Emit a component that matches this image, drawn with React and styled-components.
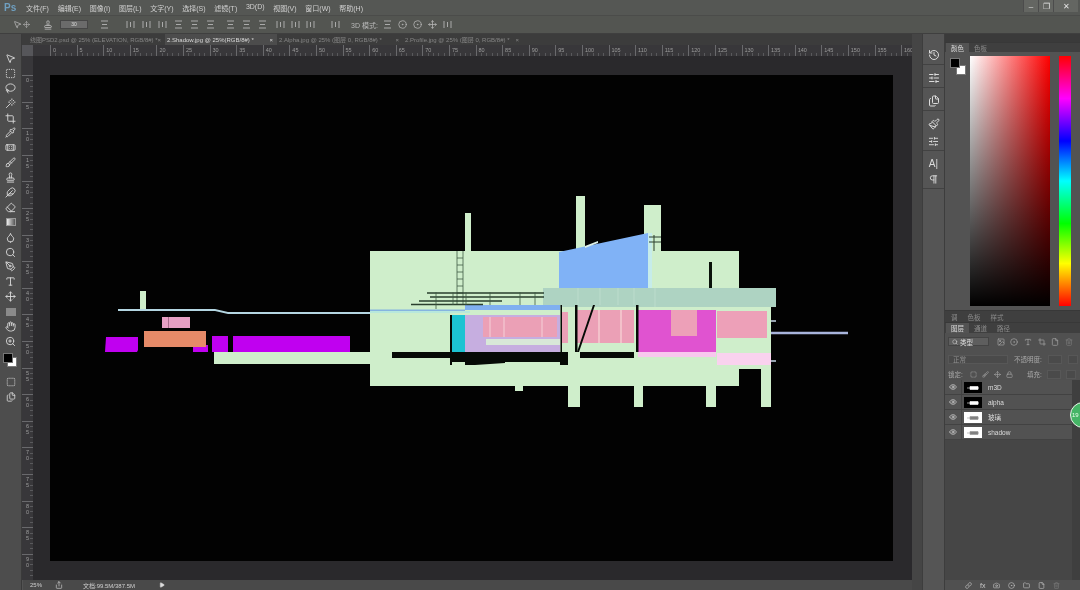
import React from "react";
import styled, { createGlobalStyle } from "styled-components";
import {
  MousePointer2, SquareDashed, Lasso, Wand, Crop, Pipette, Bandage, Brush, Stamp, Feather,
  Eraser, Droplet, Search, PenTool, Type, Hand, ZoomIn, Eye, Image, CircleDot, File, Lock, Move,
  Link, Camera, Folder, Trash2, Pilcrow, History, SlidersHorizontal, Files, Paintbrush, Play, Share,
} from "lucide-react";

const menus = ["文件(F)", "编辑(E)", "图像(I)", "图层(L)", "文字(Y)", "选择(S)", "滤镜(T)", "3D(D)", "视图(V)", "窗口(W)", "帮助(H)"];

const tabs = [
  { label: "线图PSD2.psd @ 25% (ELEVATION, RGB/8#) *", width: 137 },
  { label: "2.Shadow.jpg @ 25%(RGB/8#) *", width: 112, active: true },
  { label: "2.Alpha.jpg @ 25% (图层 0, RGB/8#) *", width: 126 },
  { label: "2.Profile.jpg @ 25% (图层 0, RGB/8#) *", width: 120 },
];

const tools = [MousePointer2, SquareDashed, Lasso, Wand, Crop, Pipette, Bandage, Brush, Stamp, Feather, Eraser, null, Droplet, Search, PenTool, Type, Move, null, Hand, ZoomIn];

const rulerMarks = Array.from({ length: 33 }, (_, i) => i * 5);
const sideMarks = Array.from({ length: 19 }, (_, i) => i * 5);

const layers = [
  { name: "m3D", dark: true },
  { name: "alpha", dark: true },
  { name: "玻璃", dark: false },
  { name: "shadow", dark: false },
];

const GlobalStyle = createGlobalStyle`
  html, body {
    margin: 0;
    padding: 0;
    background: #4f4f4f;
  }
  * {
    box-sizing: border-box;
  }
`;

const Window = styled.div`
  position: relative;
  width: 1080px;
  height: 590px;
  overflow: hidden;
  display: flex;
  flex-direction: column;
  background: #535353;
  color: #c4c4c4;
  font-family: "Liberation Sans", "Noto Sans CJK SC", sans-serif;
  font-size: 7px;
  filter: blur(0.35px);
`;

const MenuBar = styled.div`
  height: 15px;
  display: flex;
  align-items: center;
  background: #555754;
  padding-right: 2px;
`;

const Logo = styled.span`
  width: 26px;
  padding-left: 4px;
  color: #6f9fc0;
  font-size: 10px;
  font-weight: 700;
`;

const MenuItems = styled.div`
  display: flex;
  gap: 8.7px;
  font-size: 7px;
  color: #d0d0d0;
`;

const WindowButtons = styled.div`
  margin-left: auto;
  display: flex;
  height: 12px;
  margin-top: -3px;
  background: #646662;
  color: #e4e4e4;
`;

const WindowButton = styled.span`
  width: ${(p) => p.$w}px;
  display: flex;
  align-items: center;
  justify-content: center;
  font-size: 8px;
  border-left: 1px solid #4c4c4c;
`;

const OptionsBar = styled.div`
  height: 19px;
  display: flex;
  align-items: center;
  padding-left: 13px;
  background: #535551;
  border-top: 1px solid #4b4c4a;
  border-bottom: 1px solid #3f3f3f;
  color: #b9b9b9;
`;

const OptionGroup = styled.div`
  display: flex;
  align-items: center;
  gap: ${(p) => p.$gap || 5}px;
  width: ${(p) => p.$w}px;
`;

const SizeBox = styled.div`
  width: 28px;
  height: 9px;
  background: #6b6b6b;
  border: 1px solid #464646;
  font-size: 5px;
  line-height: 7px;
  text-align: center;
  color: #ddd;
`;

const AlignMark = styled.svg`
  width: 9px;
  height: 9px;
  flex: none;
`;

const Workspace = styled.div`
  flex: 1;
  min-height: 0;
  display: flex;
`;

const ToolPanel = styled.div`
  width: 22px;
  padding-top: 17px;
  background: #4d4d4d;
  border-right: 1px solid #3a3a3a;
  display: flex;
  flex-direction: column;
  color: #d8d8d8;
`;

const ToolButton = styled.div`
  height: 14.9px;
  flex: none;
  display: flex;
  align-items: center;
  justify-content: center;
`;

const GradientTool = styled.span`
  width: 10px;
  height: 8px;
  background: linear-gradient(90deg, #eee, #555);
  border: 1px solid #999;
`;

const ShapeTool = styled.span`
  width: 10px;
  height: 8px;
  background: #8a8a8a;
`;

const ToolSwatches = styled.div`
  position: relative;
  height: 24px;
  margin-top: 2px;
`;

const SwatchBox = styled.span`
  position: absolute;
  left: ${(p) => p.$x}px;
  top: ${(p) => p.$y}px;
  width: ${(p) => p.$s}px;
  height: ${(p) => p.$s}px;
  background: ${(p) => p.$c};
  border: 1px solid #777;
`;

const DocColumn = styled.div`
  width: 890px;
  display: flex;
  flex-direction: column;
`;

const TabRow = styled.div`
  height: 11px;
  display: flex;
  padding-left: 6px;
  background: #3c3c3c;
`;

const Tab = styled.div`
  width: ${(p) => p.$w}px;
  padding-left: 2px;
  display: flex;
  align-items: center;
  justify-content: space-between;
  padding-right: 4px;
  font-size: 6px;
  white-space: nowrap;
  overflow: hidden;
  color: ${(p) => (p.$active ? "#d8d8d8" : "#858585")};
  background: ${(p) => (p.$active ? "#4c4c4c" : "#3c3c3c")};
`;

const RulerRow = styled.div`
  height: 11px;
  display: flex;
`;

const RulerCorner = styled.div`
  width: 11px;
  background: #56565a;
`;

const HRuler = styled.div`
  flex: 1;
  display: flex;
  padding-left: 17px;
  overflow: hidden;
  color: #9c9c9c;
  background-color: #38373a;
  background-image:
    repeating-linear-gradient(90deg, #69696c 0 1px, transparent 1px 26.6px),
    repeating-linear-gradient(90deg, #59595c 0 1px, transparent 1px 5.32px);
  background-position: 17px 0, 17px 100%;
  background-size: 100% 100%, 100% 3px;
  background-repeat: no-repeat;
  font-size: 5.5px;
  line-height: 10px;
`;

const RulerMark = styled.span`
  width: 26.6px;
  flex: none;
  padding-left: 3px;
`;

const DocBody = styled.div`
  flex: 1;
  min-height: 0;
  display: flex;
`;

const VRuler = styled.div`
  width: 11px;
  padding-top: 19px;
  overflow: hidden;
  color: #9c9c9c;
  background-color: #38373a;
  background-image:
    repeating-linear-gradient(180deg, #69696c 0 1px, transparent 1px 26.6px),
    repeating-linear-gradient(180deg, #59595c 0 1px, transparent 1px 5.32px);
  background-position: 0 19px, 100% 19px;
  background-size: 100% 100%, 3px 100%;
  background-repeat: no-repeat;
  font-size: 5.5px;
  line-height: 6px;
`;

const SideMark = styled.div`
  height: 26.6px;
  padding: 2px 0 0 4px;
  width: 8px;
  word-break: break-all;
`;

const Pasteboard = styled.div`
  flex: 1;
  padding: 19px 0 0 17px;
  background: #2a292c;
`;

const Canvas = styled.svg`
  display: block;
  width: 843px;
  height: 486px;
  background: #020202;
`;

const StatusBar = styled.div`
  height: 10px;
  margin-left: 1px;
  display: flex;
  align-items: center;
  background: #494949;
  font-size: 6px;
  color: #cfcfcf;
`;

const StatusZoom = styled.span`
  width: 32px;
  padding-left: 7px;
`;

const StatusDoc = styled.span`
  width: 76px;
  margin-left: 20px;
`;

const ScrollGutter = styled.div`
  width: 10px;
  background: #454545;
`;

const DockStrip = styled.div`
  width: 23px;
  padding-top: 8px;
  background: #555;
  border-left: 1px solid #3d3d3d;
  border-right: 1px solid #3d3d3d;
  color: #dcdcdc;
`;

const DockGroup = styled.div`
  padding: 7px 0 3px;
  display: flex;
  flex-direction: column;
  align-items: center;
  gap: ${(p) => p.$gap || 0}px;
  border-bottom: 1px solid #424242;
  font-size: 10px;
`;

const Panels = styled.div`
  flex: 1;
  display: flex;
  flex-direction: column;
  background: #464646;
`;

const PanelHeader = styled.div`
  height: 8px;
  background: #3a3a3a;
`;

const PanelTabs = styled.div`
  height: ${(p) => p.$h}px;
  display: flex;
  align-items: stretch;
  padding-left: 1px;
  background: #3f3f3f;
  font-size: 6.5px;
  color: #8c8c8c;
  border-top: 1px solid #383838;
`;

const PanelTab = styled.span`
  padding: 0 5px;
  display: flex;
  align-items: center;
  color: ${(p) => (p.$active ? "#dcdcdc" : "#8c8c8c")};
  background: ${(p) => (p.$active ? "#535353" : "transparent")};
`;

const ColorBody = styled.div`
  height: 258px;
  padding: 4px 9px 0 5px;
  display: flex;
  background: #535353;
`;

const SwatchPair = styled.div`
  position: relative;
  width: 20px;
  height: 18px;
  margin-top: 2px;
`;

const ColorField = styled.div`
  width: 80px;
  height: 250px;
  background:
    linear-gradient(180deg, transparent, #000),
    linear-gradient(90deg, #fff, #ff0000);
`;

const HueBar = styled.div`
  width: 12px;
  height: 250px;
  margin-left: 9px;
  background: linear-gradient(
    180deg,
    #ff0000 0%,
    #ff00ff 17%,
    #0000ff 34%,
    #00ffff 50%,
    #00ff00 67%,
    #ffff00 83%,
    #ff0000 100%
  );
`;

const ControlRow = styled.div`
  height: ${(p) => p.$h}px;
  display: flex;
  align-items: center;
  gap: ${(p) => p.$gap || 6}px;
  padding-left: 3px;
  background: #505050;
  color: #a8a8a8;
  font-size: 6.5px;
`;

const FilterBox = styled.div`
  width: 41px;
  height: 9px;
  margin-right: 2px;
  padding-left: 3px;
  display: flex;
  align-items: center;
  gap: 2px;
  color: #ddd;
  background: #5e5e5e;
  border: 1px solid #444;
`;

const FieldBox = styled.div`
  width: ${(p) => p.$w}px;
  height: 9px;
  margin-left: ${(p) => p.$ml || 0}px;
  padding-left: 4px;
  line-height: 7px;
  color: #8f8f8f;
  background: #4a4a4a;
  border: 1px solid #575757;
`;

const LockLabel = styled.span`
  width: 17px;
`;

const FillLabel = styled.span`
  margin-left: 9px;
`;

const LayerArea = styled.div`
  flex: 1;
  display: flex;
  background: #464646;
`;

const LayerList = styled.div`
  width: 127px;
`;

const LayerRow = styled.div`
  height: 15px;
  display: flex;
  align-items: center;
  background: #525252;
  border-bottom: 1px solid #424242;
  color: #dcdcdc;
  font-size: 6.5px;
`;

const EyeCell = styled.div`
  width: 17px;
  height: 100%;
  display: flex;
  align-items: center;
  justify-content: center;
  border-right: 1px solid #444;
`;

const Thumb = styled.svg`
  width: 18px;
  height: 11px;
  margin: 0 6px 0 2px;
`;

const LayerScroll = styled.div`
  flex: 1;
  background: #3f3f3f;
`;

const LayerFooter = styled.div`
  height: 10px;
  display: flex;
  align-items: center;
  gap: 8px;
  padding-left: 20px;
  background: #505050;
  color: #c8c8c8;
`;

const DimTrash = styled(Trash2)`
  color: #7c7c7c;
`;

const Badge = styled.div`
  position: absolute;
  left: 1070px;
  top: 402px;
  width: 26px;
  height: 26px;
  padding-left: 1px;
  border-radius: 50%;
  border: 1px solid #e8f5e8;
  background: #45b566;
  color: #e8ffe8;
  font-size: 6px;
  line-height: 24px;
`;

const Rule = ({ v }) => <AlignMark viewBox="0 0 9 9"><path d={v ? "M1 1v7M4.5 2v5M8 1v7" : "M1 1h7M2 4.5h5M1 8h7"} stroke="#aaa" strokeWidth="1" fill="none" /></AlignMark>;

const Building = () => (
  <Canvas viewBox="50 75 843 486">
    {/* elevation colour map */}
    <g fill="#cfeecb">
      <rect x="370" y="251" width="369" height="135" />
      <rect x="465" y="213" width="6" height="38" />
      <rect x="576" y="196" width="9" height="56" />
      <rect x="644" y="205" width="17" height="46" />
      <rect x="738" y="305" width="33" height="64" />
      <rect x="761" y="369" width="10" height="38" />
      <rect x="568" y="386" width="12" height="21" />
      <rect x="634" y="386" width="9" height="21" />
      <rect x="706" y="386" width="10" height="21" />
      <rect x="214" y="352" width="156" height="12" />
      <rect x="140" y="291" width="6" height="19" />
      <rect x="515" y="386" width="8" height="5" />
    </g>
    <path d="M559 252 L648 233 L650 288 L559 288Z" fill="#80b2f6" />
    <path d="M585 246 L598 241 L598 243 L585 248Z" fill="#dcf0ea" />
    <rect x="648" y="233" width="4" height="55" fill="#c6ecea" />
    <path d="M543 288H776V307H543Z" fill="#aed3c2" />
    <path d="M600 288v17M578 288v17M618 288v17M634 288v17M655 288v19" stroke="#bcdccc" strokeWidth="1" />
    <path d="M118 309H215L228 312H370V314H228L215 311H118Z" fill="#b4d6e2" />
    <path d="M370 309.5H465V311H370Z" fill="#86b4e0" />
    <path d="M465 305H560V310H465Z" fill="#80b0f0" />
    <path d="M370 311H470V313H370Z" fill="#b8e8dc" />

    <rect x="162" y="317" width="28" height="11" fill="#e79fc4" />
    <rect x="168" y="317" width="1" height="11" fill="#a86a8a" />
    <g fill="#c000f0">
      <path d="M106 337H138V350L137 352H105Z" />
      <rect x="193" y="345" width="15" height="7" />
      <rect x="212" y="336" width="16" height="16" />
      <rect x="233" y="336" width="117" height="16" />
    </g>
    <rect x="144" y="331" width="62" height="16" fill="#e58a68" />

    {/* ladder and railings */}
    <g stroke="#3f5a45" fill="none">
      <path d="M457 251V305M463 251V305M457 258h6M457 265h6M457 272h6M457 279h6M457 286h6M457 293h6" strokeWidth="0.8" />
      <path d="M427 293H544M430 297H544M419 301H502M411 304.5H483" strokeWidth="1.3" stroke="#2a3f2e" />
      <path d="M436 292V309M453 292V305M466 292V305M490 292V305M520 292V305M535 292V305" strokeWidth="0.8" />
      <path d="M649 237H661M649 242H661M654 235V251" strokeWidth="1" stroke="#2a3f2e" />
    </g>
    <rect x="709" y="262" width="3" height="26" fill="#0a120a" />

    {/* glazing */}
    <rect x="452" y="315" width="13" height="37" fill="#1cc3d2" />
    <rect x="465" y="315" width="95" height="37" fill="#c6aee0" />
    <rect x="483" y="317" width="74" height="20" fill="#eba0b6" />
    <path d="M490 317v20M504 317v20M542 317v20" stroke="#f5d0d8" strokeWidth="1" />
    <rect x="486" y="339" width="75" height="6" fill="#d8e8d8" />
    <rect x="562" y="312" width="6" height="31" fill="#eba0b6" />
    <rect x="577" y="310" width="57" height="33" fill="#eba0b6" />
    <path d="M599 310v33M621 310v33" stroke="#f8d8d8" strokeWidth="1.2" />
    <rect x="638" y="310" width="78" height="42" fill="#e053d0" />
    <rect x="671" y="310" width="26" height="26" fill="#eda0b8" />
    <rect x="717" y="311" width="50" height="27" fill="#eda0b8" />
    <rect x="638" y="352" width="78" height="5" fill="#f8c8ee" />
    <rect x="717" y="353" width="54" height="12" fill="#f9d2ee" />

    {/* black structure */}
    <g fill="#060a06">
      <rect x="392" y="352" width="176" height="6" />
      <rect x="451" y="352" width="117" height="10" />
      <rect x="560" y="352" width="8" height="13" />
      <rect x="450" y="315" width="2" height="50" />
      <rect x="560.5" y="305" width="1.5" height="47" />
      <rect x="575" y="305" width="2.5" height="47" />
      <rect x="580" y="352" width="54" height="6" />
      <rect x="636" y="305" width="2.5" height="47" />
      <path d="M465 362H505V363L475 365H465Z" />
      <path d="M593 305H595L579 352H577Z" />
    </g>
    <path d="M771 333H848" stroke="#a8b4dc" strokeWidth="2.5" />
    <path d="M771 321h5M771 361h5" stroke="#c8d8e8" strokeWidth="1.5" />
  </Canvas>
);

const App = () => {
  return (
    <Window>
      <GlobalStyle />
      <MenuBar>
        <Logo>Ps</Logo>
        <MenuItems>
          {menus.map((m) => (
            <span key={m}>{m}</span>
          ))}
        </MenuItems>
        <WindowButtons>
          <WindowButton $w={15}>–</WindowButton>
          <WindowButton $w={15}>❐</WindowButton>
          <WindowButton $w={25}>✕</WindowButton>
        </WindowButtons>
      </MenuBar>

      <OptionsBar>
        <OptionGroup $w={30} $gap={1}>
          <MousePointer2 size={9} />
          <Move size={7} />
        </OptionGroup>
        <OptionGroup $w={17}>
          <Stamp size={10} />
        </OptionGroup>
        <OptionGroup $w={40}>
          <SizeBox>30</SizeBox>
        </OptionGroup>
        <OptionGroup $w={26}>
          <Rule />
        </OptionGroup>
        <OptionGroup $w={100} $gap={7}>
          <Rule v /><Rule v /><Rule v /><Rule /><Rule /><Rule />
        </OptionGroup>
        <OptionGroup $w={50} $gap={7}>
          <Rule /><Rule /><Rule />
        </OptionGroup>
        <OptionGroup $w={55} $gap={6}>
          <Rule v /><Rule v /><Rule v />
        </OptionGroup>
        <OptionGroup $w={20}>
          <Rule v />
        </OptionGroup>
        <OptionGroup $w={32}>
          <span>3D 模式:</span>
        </OptionGroup>
        <OptionGroup $gap={6}>
          <Rule /><CircleDot size={9} /><CircleDot size={9} /><Move size={9} /><Rule v />
        </OptionGroup>
      </OptionsBar>

      <Workspace>
        <ToolPanel>
          {tools.map((Icon, i) => (
            <ToolButton key={i}>
              {Icon ? <Icon size={11} /> : i === 11 ? <GradientTool /> : <ShapeTool />}
            </ToolButton>
          ))}
          <ToolSwatches>
            <SwatchBox $x={7} $y={6} $s={10} $c="#fff" />
            <SwatchBox $x={3} $y={2} $s={10} $c="#000" />
          </ToolSwatches>
          <ToolButton><SquareDashed size={10} /></ToolButton>
          <ToolButton><Files size={10} /></ToolButton>
        </ToolPanel>

        <DocColumn>
          <TabRow>
            {tabs.map((t) => (
              <Tab key={t.label} $w={t.width} $active={t.active}>
                <span>{t.label}</span>
                <span>×</span>
              </Tab>
            ))}
          </TabRow>
          <RulerRow>
            <RulerCorner />
            <HRuler>
              {rulerMarks.map((m) => (
                <RulerMark key={m}>{m}</RulerMark>
              ))}
            </HRuler>
          </RulerRow>
          <DocBody>
            <VRuler>
              {sideMarks.map((m) => (
                <SideMark key={m}>{m}</SideMark>
              ))}
            </VRuler>
            <Pasteboard>
              <Building />
            </Pasteboard>
          </DocBody>
          <StatusBar>
            <StatusZoom>25%</StatusZoom>
            <Share size={8} />
            <StatusDoc>文档:99.5M/387.5M</StatusDoc>
            <Play size={6} fill="#ddd" />
          </StatusBar>
        </DocColumn>

        <ScrollGutter />

        <DockStrip>
          <DockGroup><History size={12} /></DockGroup>
          <DockGroup><SlidersHorizontal size={12} /></DockGroup>
          <DockGroup><Files size={12} /></DockGroup>
          <DockGroup $gap={6}><Paintbrush size={12} /><SlidersHorizontal size={11} /></DockGroup>
          <DockGroup $gap={5}><span>A|</span><Pilcrow size={11} /></DockGroup>
        </DockStrip>

        <Panels>
          <PanelHeader />
          <PanelTabs $h={10}>
            <PanelTab $active>颜色</PanelTab>
            <PanelTab>色板</PanelTab>
          </PanelTabs>
          <ColorBody>
            <SwatchPair>
              <SwatchBox $x={6} $y={7} $s={10} $c="#fff" />
              <SwatchBox $x={0} $y={0} $s={10} $c="#000" />
            </SwatchPair>
            <ColorField />
            <HueBar />
          </ColorBody>
          <PanelTabs $h={12}>
            <PanelTab>调</PanelTab>
            <PanelTab>色板</PanelTab>
            <PanelTab>样式</PanelTab>
          </PanelTabs>
          <PanelTabs $h={11}>
            <PanelTab $active>图层</PanelTab>
            <PanelTab>通道</PanelTab>
            <PanelTab>路径</PanelTab>
          </PanelTabs>
          <ControlRow $h={17} $gap={5.7}>
            <FilterBox><Search size={6} />类型</FilterBox>
            <Image size={8} />
            <CircleDot size={8} />
            <Type size={8} />
            <Crop size={8} />
            <File size={8} />
            <DimTrash size={8} />
          </ControlRow>
          <ControlRow $h={18}>
            <FieldBox $w={60}>正常</FieldBox>
            <span>不透明度:</span>
            <FieldBox $w={14} />
            <FieldBox $w={10} />
          </ControlRow>
          <ControlRow $h={12} $gap={5}>
            <LockLabel>锁定:</LockLabel>
            <SquareDashed size={7} />
            <Brush size={7} />
            <Move size={7} />
            <Lock size={7} />
            <FillLabel>填充:</FillLabel>
            <FieldBox $w={14} />
            <FieldBox $w={10} />
          </ControlRow>
          <LayerArea>
            <LayerList>
              {layers.map((l) => (
                <LayerRow key={l.name}>
                  <EyeCell><Eye size={8} /></EyeCell>
                  <Thumb viewBox="0 0 18 11">
                    <rect width="18" height="11" fill={l.dark ? "#000" : "#fff"} />
                    <path d="M3 6h12M6 4.5h8v3H6z" fill={l.dark ? "#fff" : "#777"} stroke={l.dark ? "#fff" : "#999"} strokeWidth="0.6" />
                  </Thumb>
                  <span>{l.name}</span>
                </LayerRow>
              ))}
            </LayerList>
            <LayerScroll />
          </LayerArea>
          <LayerFooter>
            <Link size={7} />
            <span>fx</span>
            <Camera size={7} />
            <CircleDot size={7} />
            <Folder size={7} />
            <File size={7} />
            <DimTrash size={7} />
          </LayerFooter>
        </Panels>
      </Workspace>
      <Badge>19</Badge>
    </Window>
  );
};

export default App;
